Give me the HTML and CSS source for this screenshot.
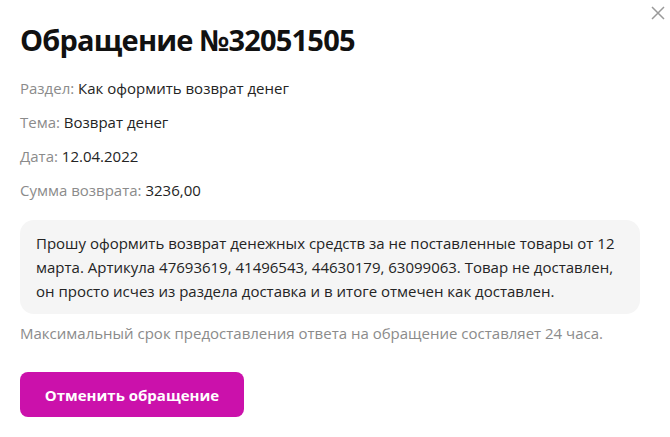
FILE: index.html
```html
<!DOCTYPE html>
<html lang="ru">
<head>
  <meta charset="UTF-8">
  <title>Обращение №32051505</title>
  <link rel="stylesheet" href="styles.css">
</head>
<body>
  <div class="modal">
    <button class="close" aria-label="Закрыть">
      <svg width="14" height="14" viewBox="0 0 14 14"><path d="M1 1L13 13M13 1L1 13" stroke="#9a9a9a" stroke-width="1.5" fill="none"/></svg>
    </button>
    <h1 class="title">Обращение №32051505</h1>
    <ul class="details">
      <li><span class="label">Раздел:</span> Как оформить возврат денег</li>
      <li><span class="label">Тема:</span> Возврат денег</li>
      <li><span class="label">Дата:</span> 12.04.2022</li>
      <li><span class="label">Сумма возврата:</span> 3236,00</li>
    </ul>
    <div class="message">
      Прошу оформить возврат денежных средств за не поставленные товары от 12 марта. Артикула 47693619, 41496543, 44630179, 63099063. Товар не доставлен, он просто исчез из раздела доставка и в итоге отмечен как доставлен.
    </div>
    <p class="note">Максимальный срок предоставления ответа на обращение составляет 24 часа.</p>
    <button class="cancel-btn">Отменить обращение</button>
  </div>
</body>
</html>
```
FILE: styles.css
```css
body {
  margin: 0;
  background: #ffffff;
  font-family: 'Open Sans', sans-serif;
  color: #242424;
}

.modal {
  position: relative;
  padding: 20px;
}

.close {
  position: absolute;
  top: 6px;
  right: 5px;
  background: none;
  border: none;
  padding: 0;
  cursor: pointer;
}

.close svg {
  display: block;
}

.title {
  margin: 0;
  font-size: 29px;
  font-weight: 700;
  letter-spacing: -0.8px;
  line-height: 40px;
  color: #111111;
}

.details {
  list-style: none;
  margin: 18px 0 0;
  padding: 0;
  font-size: 15px;
}

.details li {
  line-height: 20px;
  margin-bottom: 14px;
}

.label {
  color: #8b8b8b;
}

.message {
  margin: 20px 10px 0 0;
  background: #f5f5f5;
  border-radius: 14px;
  padding: 11px 20px 11px 16px;
  font-size: 15px;
  line-height: 24px;
}

.note {
  margin: 7px 0 0;
  font-size: 15px;
  line-height: 24px;
  color: #8b8b8b;
}

.cancel-btn {
  display: block;
  margin-top: 27px;
  width: 224px;
  height: 45px;
  background: #cb11ab;
  color: #ffffff;
  border: none;
  border-radius: 8px;
  font-family: inherit;
  font-size: 15px;
  font-weight: 700;
  cursor: pointer;
}
```
